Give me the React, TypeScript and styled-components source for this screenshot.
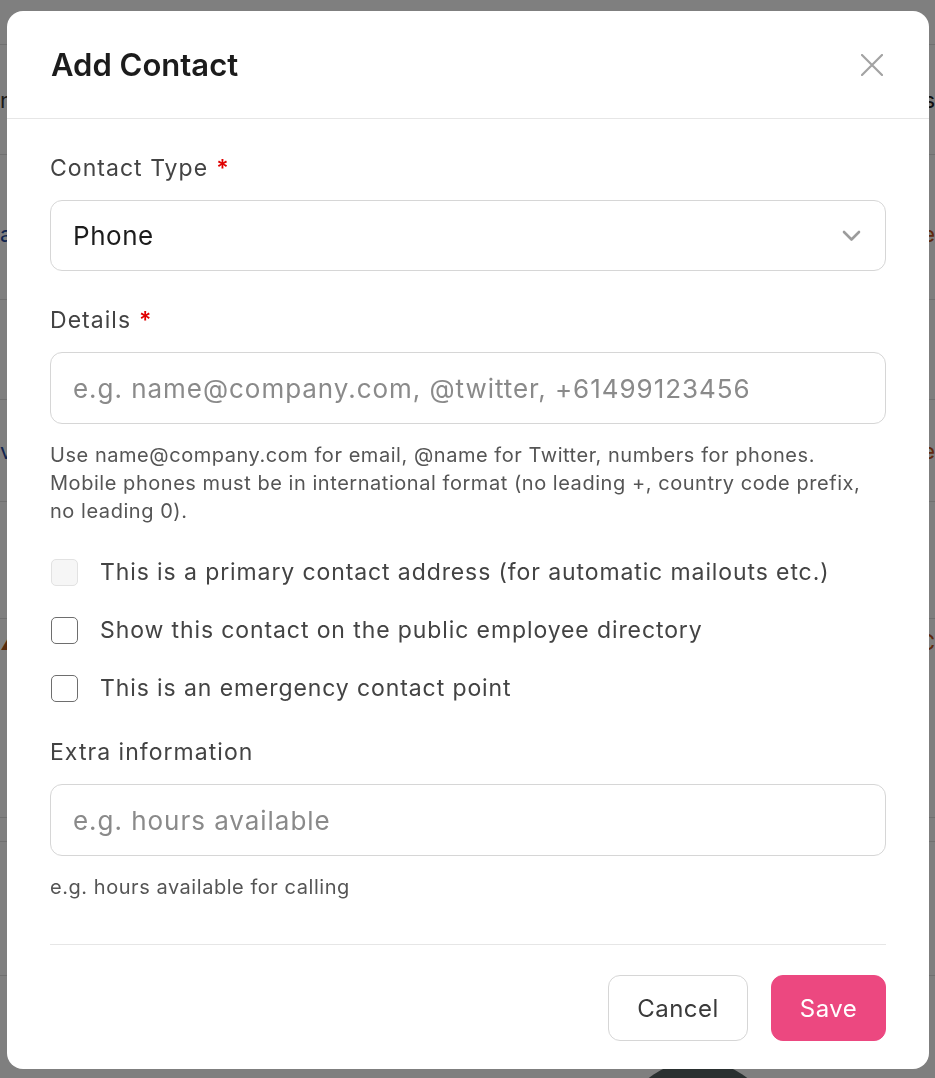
import React from "react";
import styled, { createGlobalStyle } from "styled-components";

const GlobalStyle = createGlobalStyle`
  html, body {
    margin: 0;
    padding: 0;
    background: #ffffff;
    font-family: Inter, "Noto Sans", "Liberation Sans", sans-serif;
  }
  * {
    box-sizing: border-box;
  }
`;

/* the page behind the dialog */
const Page = styled.div`
  display: flex;
  flex-direction: column;
  width: 935px;
  height: 1078px;
  overflow: hidden;
`;

const PageRow = styled.div<{ $h: number; $top?: number }>`
  flex: none;
  display: flex;
  align-items: ${(p) => (p.$top !== undefined ? "flex-start" : "center")};
  justify-content: space-between;
  height: ${(p) => p.$h}px;
  padding-top: ${(p) => p.$top ?? 0}px;
  border-bottom: 1px solid #e0e0e0;
  font-size: 22px;
`;

const PageGlyph = styled.span<{ $color: string }>`
  color: ${(p) => p.$color};
`;

const AvatarRow = styled.div`
  flex: none;
  display: flex;
  padding: 85px 0 0 618px;
`;

const Avatar = styled.div`
  width: 160px;
  height: 160px;
  border-radius: 50%;
  background: radial-gradient(circle at 52% 30%, #111 0 18%, #556060 19% 100%);
`;

const Overlay = styled.div`
  position: fixed;
  inset: 0;
  display: flex;
  align-items: flex-start;
  padding: 11px 0 0 7px;
  background: rgba(0, 0, 0, 0.5);
`;

const Modal = styled.div`
  display: flex;
  flex-direction: column;
  width: 922px;
  background: #ffffff;
  border-radius: 16px;
  overflow: hidden;
  letter-spacing: 0.034em;
`;

const Header = styled.div`
  display: flex;
  align-items: center;
  justify-content: space-between;
  height: 108px;
  padding: 0 46px 0 44px;
  border-bottom: 1px solid #e6e6e6;
`;

const Title = styled.h2`
  margin: 0;
  font-size: 31px;
  font-weight: 600;
  color: #1c1c1c;
  letter-spacing: 0;
`;

const CloseButton = styled.button`
  display: flex;
  align-items: center;
  justify-content: center;
  width: 22px;
  height: 22px;
  padding: 0;
  border: 0;
  background: none;
  cursor: pointer;
`;

const Body = styled.div`
  display: flex;
  flex-direction: column;
  padding: 33px 43px 28px;
`;

const Field = styled.div<{ $gap?: number }>`
  display: flex;
  flex-direction: column;
  margin-bottom: ${(p) => p.$gap ?? 33}px;
`;

const Label = styled.label`
  display: block;
  margin-bottom: 16px;
  font-size: 23px;
  line-height: 32px;
  color: #434343;
  letter-spacing: 0.045em;
`;

const Required = styled.span`
  margin-left: 8px;
  color: #e00000;
  font-weight: 600;
`;

const SelectBox = styled.div`
  display: flex;
  align-items: center;
  height: 71px;
  padding: 0 24px 0 22px;
  border: 1px solid #d6d6d6;
  border-radius: 12px;
  font-size: 26px;
  color: #1c1c1c;
`;

const SelectValue = styled.span`
  flex: 1;
`;

const TextInput = styled.input`
  height: 72px;
  padding: 0 22px;
  border: 1px solid #d6d6d6;
  border-radius: 12px;
  font-family: inherit;
  font-size: 26px;
  letter-spacing: 0.037em;
  color: #1c1c1c;
  outline: none;

  &::placeholder {
    color: #8a8a8a;
  }
`;

const Help = styled.p`
  margin: 17px 0 0;
  font-size: 20px;
  line-height: 28px;
  color: #555555;
`;

const Checks = styled.div`
  display: flex;
  flex-direction: column;
  gap: 26px;
  margin: 31px 0 32px;
`;

const CheckRow = styled.label`
  display: flex;
  align-items: center;
  gap: 22px;
  height: 32px;
  font-size: 23px;
  color: #434343;
  letter-spacing: 0.039em;
`;

const CheckBox = styled.input`
  appearance: none;
  flex: none;
  width: 27px;
  height: 27px;
  margin: 0 0 0 1px;
  border: 1.5px solid #6e6e6e;
  border-radius: 5px;
  background: #ffffff;

  &:disabled {
    border-color: #e2e2e2;
    background: #f6f6f6;
  }
`;

const Footer = styled.div`
  display: flex;
  justify-content: flex-end;
  gap: 23px;
  margin-top: 43px;
  padding-top: 30px;
  border-top: 1px solid #e6e6e6;
`;

const Button = styled.button<{ $primary?: boolean }>`
  width: ${(p) => (p.$primary ? 115 : 140)}px;
  height: 66px;
  padding: 0;
  border: 1px solid ${(p) => (p.$primary ? "#ec4880" : "#d6d6d6")};
  border-radius: 12px;
  background: ${(p) => (p.$primary ? "#ec4880" : "#ffffff")};
  color: ${(p) => (p.$primary ? "#ffffff" : "#3a3a3a")};
  font-family: inherit;
  font-size: 24px;
  letter-spacing: 0.02em;
  cursor: pointer;
`;

type PageRowData = {
  h: number;
  top?: number;
  left?: string;
  lc?: string;
  right?: string;
  rc?: string;
};

const pageRows: PageRowData[] = [
  { h: 45 },
  { h: 110, left: "n", lc: "#333", right: "s", rc: "#222" },
  { h: 145, top: 66, left: "a", lc: "#2148a0", right: "e", rc: "#c0501a" },
  { h: 100 },
  { h: 102, left: "vi", lc: "#2148a0", right: "e", rc: "#c0501a" },
  { h: 117 },
  { h: 199, top: 10, left: "▲", lc: "#b0561a", right: "C", rc: "#c0501a" },
  { h: 24 },
  { h: 134 },
];

export default function App() {
  return (
    <>
      <GlobalStyle />
      <Page>
        {pageRows.map((r, i) => (
          <PageRow key={i} $h={r.h} $top={r.top}>
            <PageGlyph $color={r.lc ?? "#333"}>{r.left ?? ""}</PageGlyph>
            <PageGlyph $color={r.rc ?? "#333"}>{r.right ?? ""}</PageGlyph>
          </PageRow>
        ))}
        <AvatarRow>
          <Avatar />
        </AvatarRow>
      </Page>

      <Overlay>
        <Modal role="dialog" aria-labelledby="add-contact-title">
          <Header>
            <Title id="add-contact-title">Add Contact</Title>
            <CloseButton aria-label="Close">
              <svg width="22" height="22" viewBox="0 0 22 22">
                <path d="M1 1L21 21M21 1L1 21" stroke="#a3a3a3" strokeWidth="2.2" strokeLinecap="round" />
              </svg>
            </CloseButton>
          </Header>

          <Body>
            <Field>
              <Label>
                Contact Type<Required>*</Required>
              </Label>
              <SelectBox>
                <SelectValue>Phone</SelectValue>
                <svg width="19" height="12" viewBox="0 0 19 12">
                  <path d="M2 2L9.5 9.5L17 2" fill="none" stroke="#9c9c9c" strokeWidth="2.6" strokeLinecap="round" strokeLinejoin="round" />
                </svg>
              </SelectBox>
            </Field>

            <Field $gap={0}>
              <Label>
                Details<Required>*</Required>
              </Label>
              <TextInput placeholder="e.g. name@company.com, @twitter, +61499123456" />
              <Help>
                Use name@company.com for email, @name for Twitter, numbers for phones.
                <br />
                Mobile phones must be in international format (no leading +, country code prefix,
                <br />
                no leading 0).
              </Help>
            </Field>

            <Checks>
              <CheckRow>
                <CheckBox type="checkbox" disabled />
                This is a primary contact address (for automatic mailouts etc.)
              </CheckRow>
              <CheckRow>
                <CheckBox type="checkbox" />
                Show this contact on the public employee directory
              </CheckRow>
              <CheckRow>
                <CheckBox type="checkbox" />
                This is an emergency contact point
              </CheckRow>
            </Checks>

            <Field $gap={0}>
              <Label>Extra information</Label>
              <TextInput placeholder="e.g. hours available" />
              <Help>e.g. hours available for calling</Help>
            </Field>

            <Footer>
              <Button>Cancel</Button>
              <Button $primary>Save</Button>
            </Footer>
          </Body>
        </Modal>
      </Overlay>
    </>
  );
}
